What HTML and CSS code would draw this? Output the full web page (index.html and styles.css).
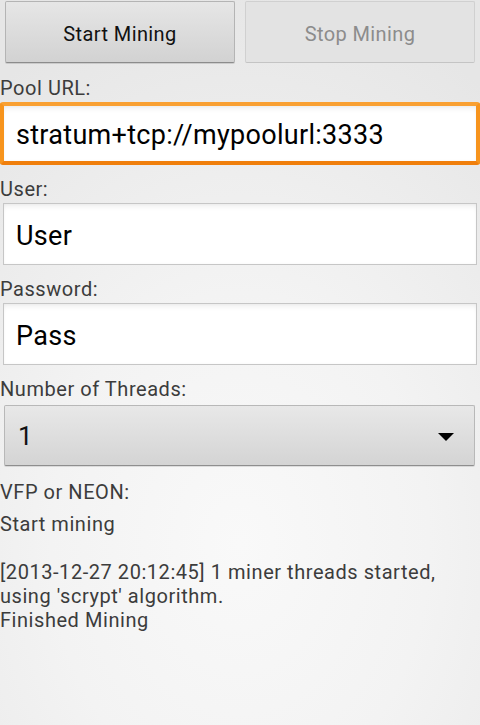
FILE: index.html
```html
<!DOCTYPE html>
<html>
<head>
<meta charset="utf-8">
<link rel="stylesheet" href="styles.css">
</head>
<body>
<div class="screen">
  <div class="buttons">
    <div class="btn">Start Mining</div>
    <div class="btn disabled">Stop Mining</div>
  </div>
  <div class="lbl first">Pool URL:</div>
  <div class="field focused">stratum+tcp://mypoolurl:3333</div>
  <div class="lbl">User:</div>
  <div class="field">User</div>
  <div class="lbl">Password:</div>
  <div class="field">Pass</div>
  <div class="lbl">Number of Threads:</div>
  <div class="spinner">
    <span class="spin-val">1</span>
    <svg class="arrow" width="16" height="8" viewBox="0 0 16 8"><polygon points="0,0 16,0 8,8" fill="#000"/></svg>
  </div>
  <div class="lbl vfp">VFP or NEON:</div>
  <div class="log">Start mining<br><br>[2013-12-27 20:12:45] 1 miner threads started, using 'scrypt' algorithm.<br>Finished Mining</div>
</div>
</body>
</html>
```

FILE: styles.css
```css
html, body {
  margin: 0;
  padding: 0;
}
body {
  width: 480px;
  height: 725px;
  overflow: hidden;
  font-family: Roboto, "Noto Sans", sans-serif;
  background: radial-gradient(ellipse 420px 560px at 50% 75%, #f9f9f9 0%, #f3f3f3 45%, #e6e6e6 100%);
}
.screen {
  display: flex;
  flex-direction: column;
}
.buttons {
  display: flex;
  gap: 10px;
  padding: 1px 5px 0;
}
.btn {
  flex: 1;
  height: 62px;
  box-sizing: border-box;
  display: flex;
  align-items: center;
  justify-content: center;
  padding-top: 4px;
  font-size: 20px;
  letter-spacing: 0.4px;
  color: #111;
  border: 1px solid #b4b4b4;
  border-bottom-color: #8c8c8c;
  border-radius: 2px;
  background: linear-gradient(#e6e6e6, #d2d2d2);
  box-shadow: 0 1px 0 rgba(0,0,0,0.12);
}
.btn.disabled {
  color: #8c8c8c;
  background: #e3e3e3;
  border-color: #d0d0d0;
  border-bottom-color: #c4c4c4;
  box-shadow: none;
}
.lbl {
  font-size: 20px;
  letter-spacing: 0.55px;
  line-height: 24px;
  color: #3c3c3c;
  margin-top: 12px;
}
.lbl.first {
  margin-top: 13px;
}
.field {
  margin: 2px 3px 0;
  height: 62px;
  box-sizing: border-box;
  border: 1px solid #c6c6c6;
  background: #fff;
  box-shadow: inset 0 6px 6px -4px rgba(0,0,0,0.08), inset 0 0 3px rgba(0,0,0,0.04);
  font-size: 27px;
  letter-spacing: 0.3px;
  color: #000;
  display: flex;
  align-items: center;
  padding: 3px 0 0 12px;
}
.field.focused {
  margin: 2px 0 0;
  height: 63px;
  border: 4px solid #f7941d;
  border-top-color: #f9a032;
  border-bottom-color: #f07f0c;
  border-radius: 3px;
  padding: 3px 0 0 12px;
}
.spinner {
  margin: 4px 5px 0 4px;
  height: 61px;
  box-sizing: border-box;
  border: 1px solid #b8b8b8;
  border-bottom-color: #8e8e8e;
  border-radius: 2px;
  background: linear-gradient(#e8e8e8, #d4d4d4);
  box-shadow: 0 1px 0 rgba(0,0,0,0.1);
  display: flex;
  align-items: center;
  justify-content: space-between;
  padding: 0 20px 0 13px;
  font-size: 26px;
  color: #111;
}
.arrow {
  display: block;
  margin-top: 2px;
}
.lbl.vfp {
  margin-top: 14px;
}
.log {
  font-size: 20px;
  letter-spacing: 0.55px;
  line-height: 24px;
  color: #3c3c3c;
  margin-top: 8px;
  padding-right: 30px;
}
```
